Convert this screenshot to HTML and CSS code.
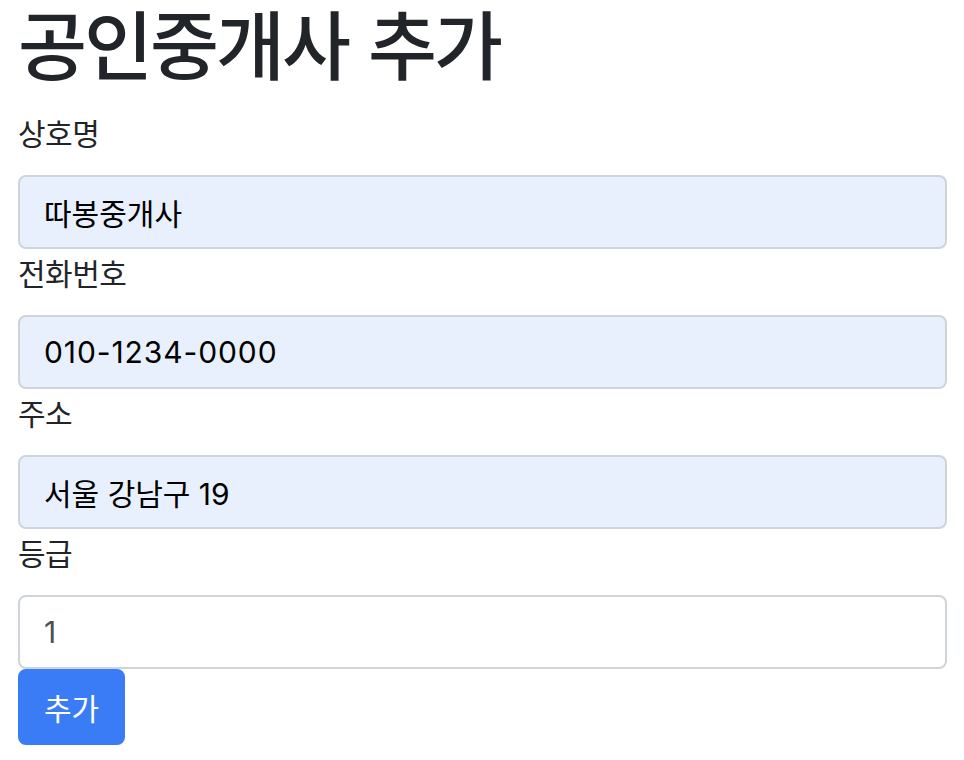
FILE: index.html
```html
<!DOCTYPE html>
<html lang="ko">
<head>
<meta charset="utf-8">
<title>공인중개사 추가</title>
<link rel="stylesheet" href="styles.css">
</head>
<body>
<div class="page">
  <h1 class="title">공인중개사 추가</h1>
  <form class="form">
    <label class="label" for="name">상호명</label>
    <input class="field field-filled" id="name" type="text" value="따봉중개사">
    <label class="label" for="tel">전화번호</label>
    <input class="field field-filled field-tel" id="tel" type="text" value="010-1234-0000">
    <label class="label" for="addr">주소</label>
    <input class="field field-filled" id="addr" type="text" value="서울 강남구 19">
    <label class="label" for="grade">등급</label>
    <input class="field field-num" id="grade" type="text" value="1">
    <button class="btn" type="button">추가</button>
  </form>
</div>
</body>
</html>
```

FILE: styles.css
```css
html, body {
  margin: 0;
  padding: 0;
  background: #ffffff;
}

.page {
  padding: 0 17px 0 18px;
  font-family: "Inter", "Noto Sans CJK KR", sans-serif;
  color: #212529;
}

.title {
  margin: 0 0 26px 0;
  font-family: "Noto Sans CJK KR", sans-serif;
  font-size: 75px;
  font-weight: 500;
  line-height: 83px;
  letter-spacing: -3px;
  word-spacing: 2px;
  white-space: nowrap;
}

.form {
  display: flex;
  flex-direction: column;
  align-items: flex-start;
}

.label {
  display: block;
  font-size: 30px;
  line-height: 50px;
  margin-bottom: 16px;
  letter-spacing: -0.5px;
}

.field {
  box-sizing: border-box;
  width: 100%;
  height: 74px;
  margin: 0;
  padding: 0 24px;
  border: 2px solid #ced4da;
  border-radius: 8px;
  background: #ffffff;
  font-family: "Inter", "Noto Sans CJK KR", sans-serif;
  font-size: 30px;
  letter-spacing: 0;
  color: #495057;
  outline: none;
}

.field-filled {
  background: #e8f0fe;
  color: #000000;
}

.field-tel {
  letter-spacing: 0.9px;
}

.field-num {
  letter-spacing: 0;
}

.btn {
  box-sizing: border-box;
  height: 76px;
  margin: 0;
  padding: 0 24px;
  border: 2px solid #3a7cf6;
  border-radius: 8px;
  background: #3a7cf6;
  color: #ffffff;
  font-family: "Inter", "Noto Sans CJK KR", sans-serif;
  font-size: 30px;
  letter-spacing: 0;
  cursor: pointer;
}
```
